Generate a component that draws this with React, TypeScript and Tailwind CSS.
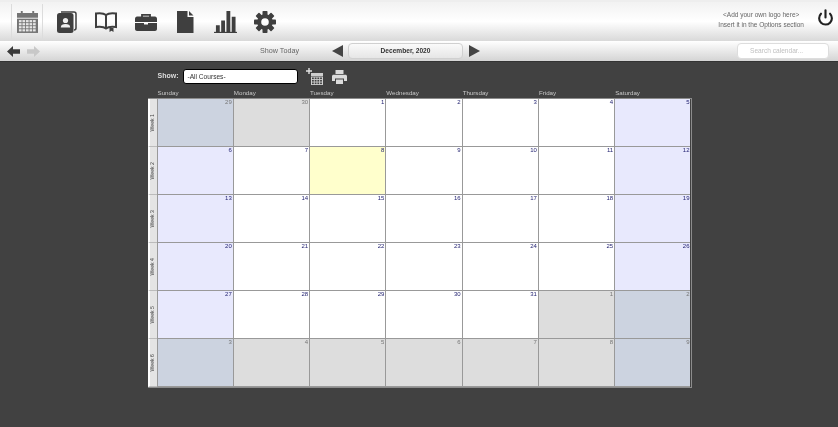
import { Power } from 'lucide-react';

const FONT = "font-['Liberation_Sans',Arial,sans-serif]";
const DAYS = ['Sunday', 'Monday', 'Tuesday', 'Wednesday', 'Thursday', 'Friday', 'Saturday'];

// [day number, is it outside December]
const WEEKS: [number, boolean][][] = [
  [[29, true], [30, true], [1, false], [2, false], [3, false], [4, false], [5, false]],
  [[6, false], [7, false], [8, false], [9, false], [10, false], [11, false], [12, false]],
  [[13, false], [14, false], [15, false], [16, false], [17, false], [18, false], [19, false]],
  [[20, false], [21, false], [22, false], [23, false], [24, false], [25, false], [26, false]],
  [[27, false], [28, false], [29, false], [30, false], [31, false], [1, true], [2, true]],
  [[3, true], [4, true], [5, true], [6, true], [7, true], [8, true], [9, true]],
];

function CalendarIcon() {
  return (
    <svg width="21" height="23" viewBox="0 0 22 24" className="text-[#757575]">
      <path fill="currentColor" d="M0 3h4V1h2v2h10V1h2v2h4v5H0z" />
      <rect x="0" y="9" width="22" height="15" fill="currentColor" />
      {[0, 1, 2, 3].map((r) =>
        [0, 1, 2, 3, 4].map((c) => (
          <rect key={`${r}-${c}`} x={2 + c * 3.7} y={10.5 + r * 3.2} width="2.8" height="2.3" fill="#e6e6e6" />
        ))
      )}
    </svg>
  );
}

function ContactsIcon() {
  return (
    <svg width="20" height="22" viewBox="0 0 20 22" className="text-[#3f3f3f]">
      <path fill="none" stroke="currentColor" strokeWidth="1.5" d="M4 1h13c1 0 2 1 2 2v14c0 1-.6 2-2 2" />
      <rect x="0" y="2" width="16.5" height="20" rx="2.5" fill="currentColor" />
      <circle cx="8.5" cy="9.5" r="2.6" fill="#eee" />
      <path fill="#eee" d="M3.8 16.5c0-2.8 2-3.6 4.700-3.600s4.700.8 4.700 3.600z" />
    </svg>
  );
}

function BookIcon() {
  return (
    <svg width="22" height="20" viewBox="0 0 22 20" className="text-[#3f3f3f]">
      <path
        fill="none"
        stroke="currentColor"
        strokeWidth="2"
        d="M11 3C9 1.300 5 1 1 1.500v13.500c4-.5 8-.3 10 1.500 2-1.800 6-2 10-1.500V1.500C17 1 13 1.300 11 3zM11 3v13.500"
      />
      <path fill="currentColor" d="M14.500 16h4v4l-2-1.300-2 1.300z" />
    </svg>
  );
}

function BriefcaseIcon() {
  return (
    <svg width="22" height="18" viewBox="0 0 22 18" className="text-[#3f3f3f]">
      <path fill="none" stroke="currentColor" strokeWidth="1.800" d="M7 4V1.800h8V4" />
      <path fill="currentColor" d="M2 3.500h18c1 0 2 1 2 2v3.500H0V5.500c0-1 1-2 2-2z" />
      <path fill="currentColor" d="M0 10h9v1.500h4V10h9v6c0 1-1 2-2 2H2c-1 0-2-1-2-2z" />
    </svg>
  );
}

function PageIcon() {
  return (
    <svg width="17" height="22" viewBox="0 0 17 22" className="text-[#3f3f3f]">
      <path fill="currentColor" d="M0 0h10.500v6h6v16H0zM12 0l4.500 4.500H12z" />
    </svg>
  );
}

function ChartIcon() {
  return (
    <svg width="25" height="22" viewBox="0 0 24 23" className="text-[#3f3f3f]">
      <path fill="currentColor" d="M2 15h4v7H2zM7.500 10h4v12h-4zM13 0h4v22h-4zM18.500 6h4v16h-4z" />
      <rect x="0" y="21.800" width="24" height="1.200" fill="currentColor" />
    </svg>
  );
}

function GearIcon() {
  return (
    <svg width="22" height="22" viewBox="0 0 22 22" className="text-[#3f3f3f]">
      <g fill="currentColor">
        {[0, 45, 90, 135, 180, 225, 270, 315].map((a) => (
          <rect key={a} x="8.500" y="0" width="5" height="5" rx="0.800" transform={`rotate(${a} 11 11)`} />
        ))}
      </g>
      <circle cx="11" cy="11" r="5.800" fill="none" stroke="currentColor" strokeWidth="4" />
    </svg>
  );
}

function NavArrow({ color, flip }: { color: string; flip?: boolean }) {
  return (
    <svg width="13" height="11" viewBox="0 0 13 11" className={flip ? 'rotate-180' : ''}>
      <path fill={color} d="M0 5.500L6 0v3.200h7v4.600H6V11z" />
    </svg>
  );
}

function AddCalendarIcon() {
  return (
    <svg width="17" height="17" viewBox="0 0 17 17">
      <path fill="#e2e2e2" d="M0 2.300h2.300V0h1.400v2.300H6v1.400H3.700V6H2.300V3.700H0z" />
      <path fill="#cfcfcf" d="M5 5h12v3H5z" />
      <rect x="5" y="8.500" width="12" height="8.500" fill="#cfcfcf" />
      {[0, 1, 2].map((r) =>
        [0, 1, 2, 3].map((c) => (
          <rect key={`${r}-${c}`} x={6 + c * 2.7} y={9.500 + r * 2.500} width="1.800" height="1.600" fill="#414141" />
        ))
      )}
    </svg>
  );
}

function PrinterIcon() {
  return (
    <svg width="15" height="14" viewBox="0 0 15 14">
      <path fill="#dcdcdc" d="M3.500 0h8v4h-8z" />
      <path fill="#dcdcdc" d="M1.500 4.800h12c.8 0 1.500.7 1.500 1.500V11h-3V8.500H3V11H0V6.300c0-.8.7-1.500 1.500-1.500z" />
      <path fill="#dcdcdc" d="M4 9.500h7V14H4z" />
    </svg>
  );
}

function cellColor(col: number, outside: boolean, today: boolean) {
  const weekend = col === 0 || col === 6;
  if (today) return 'bg-[#ffffcc]';
  if (outside) return weekend ? 'bg-[#ccd3e0]' : 'bg-[#dddddd]';
  return weekend ? 'bg-[#e8e9fd]' : 'bg-white';
}

export default function App() {
  return (
    <div className={`${FONT} min-h-[427px] bg-[#414141] flex flex-col [will-change:transform]`}>
      {/* Main icon bar */}
      <header className="h-[41px] flex items-center bg-gradient-to-b from-[#f2f2f2] via-white to-[#d9d9d9] border-t-2 border-[#eeeeee]">
        <div className="ml-[11px] w-[32px] h-[36px] flex items-center justify-center border-x border-[#dcdcdc]">
          <CalendarIcon />
        </div>
        <div className="ml-[14px] w-[20px] flex justify-center"><ContactsIcon /></div>
        <div className="ml-[18px] w-[22px] flex justify-center"><BookIcon /></div>
        <div className="ml-[18px] w-[22px] flex justify-center"><BriefcaseIcon /></div>
        <div className="ml-[20px] w-[17px] flex justify-center"><PageIcon /></div>
        <div className="ml-[19px] w-[25px] flex justify-center"><ChartIcon /></div>
        <div className="ml-[16px] w-[22px] flex justify-center"><GearIcon /></div>
        <div className="ml-auto mr-[13px] mb-[3px] text-center text-[6.5px] leading-[10px] text-[#666666]">
          <div>&lt;Add your own logo here&gt;</div>
          <div>Insert it in the Options section</div>
        </div>
        <Power className="mr-[4px] mb-[9px] w-[17px] h-[17px] text-[#222222]" strokeWidth={3} />
      </header>

      {/* Navigation bar */}
      <div className="h-[21px] flex items-center bg-gradient-to-b from-white to-[#d4d4d4] border-b border-[#333333]">
        <div className="ml-[7px]"><NavArrow color="#3a3a3a" /></div>
        <div className="ml-[7px]"><NavArrow color="#c8c8c8" flip /></div>
        <span className="ml-[220px] w-[39px] text-[7.2px] whitespace-nowrap text-[#666666]">Show Today</span>
        <div className="ml-[33px] w-0 h-0 border-y-[6px] border-y-transparent border-r-[11px] border-r-[#444444]" />
        <div className="ml-[5px] w-[115px] h-[16px] flex items-center justify-center rounded-[4px] border border-[#d0d0d0] bg-gradient-to-b from-[#fafafa] to-[#e6e6e6] text-[6.6px] font-bold text-[#333333]">
          December, 2020
        </div>
        <div className="ml-[6px] w-0 h-0 border-y-[6px] border-y-transparent border-l-[11px] border-l-[#444444]" />
        <div className="ml-auto mr-[9px] w-[92px] h-[16px] flex items-center pl-[12px] rounded-[4px] border border-[#dddddd] bg-white text-[6.6px] text-[#c0c0c0]">
          Search calendar...
        </div>
      </div>

      {/* Calendar */}
      <main className="mx-auto w-[543px]">
        <div className="h-[15px] mt-[7px] flex items-center pl-[10px]">
          <span className="w-[25px] text-[7px] font-bold text-[#dddddd]">Show:</span>
          <div className="w-[115px] h-[15px] flex items-center pl-[4px] rounded-[3px] border border-black bg-white text-[6.6px] text-[#333333]">
            -All Courses-
          </div>
          <div className="ml-[8px]"><AddCalendarIcon /></div>
          <div className="ml-[9px]"><PrinterIcon /></div>
        </div>
        <div className="h-[8px] mt-[5px] grid grid-cols-[9px_repeat(7,1fr)] items-center">
          <div />
          {DAYS.map((d) => (
            <span key={d} className="pl-[1px] text-[6.2px] leading-[8px] text-[#c8c8c8]">{d}</span>
          ))}
        </div>
        <div className="mt-[1px] w-[544px] border-r border-b border-t border-[#8c8c8c]">
          {WEEKS.map((week, w) => (
            <div key={w} className="h-[48px] grid grid-cols-[9px_repeat(7,1fr)]">
              <div className="flex items-center justify-center bg-[#e4e4e4] border-l-2 border-white border-b border-b-[#bbbbbb]">
                <span className="[writing-mode:vertical-rl] rotate-180 text-[5.2px] leading-none text-[#444444] whitespace-nowrap">
                  Week {w + 1}
                </span>
              </div>
              {week.map(([day, outside], c) => (
                <div
                  key={c}
                  className={`${cellColor(c, outside, w === 1 && c === 2)} border-b border-l border-[#999999] pr-[1px] text-right text-[6px] leading-[7px] ${
                    outside ? 'text-[#777777]' : 'text-[#1e1e6e]'
                  }`}
                >
                  {day}
                </div>
              ))}
            </div>
          ))}
        </div>
      </main>
    </div>
  );
}
